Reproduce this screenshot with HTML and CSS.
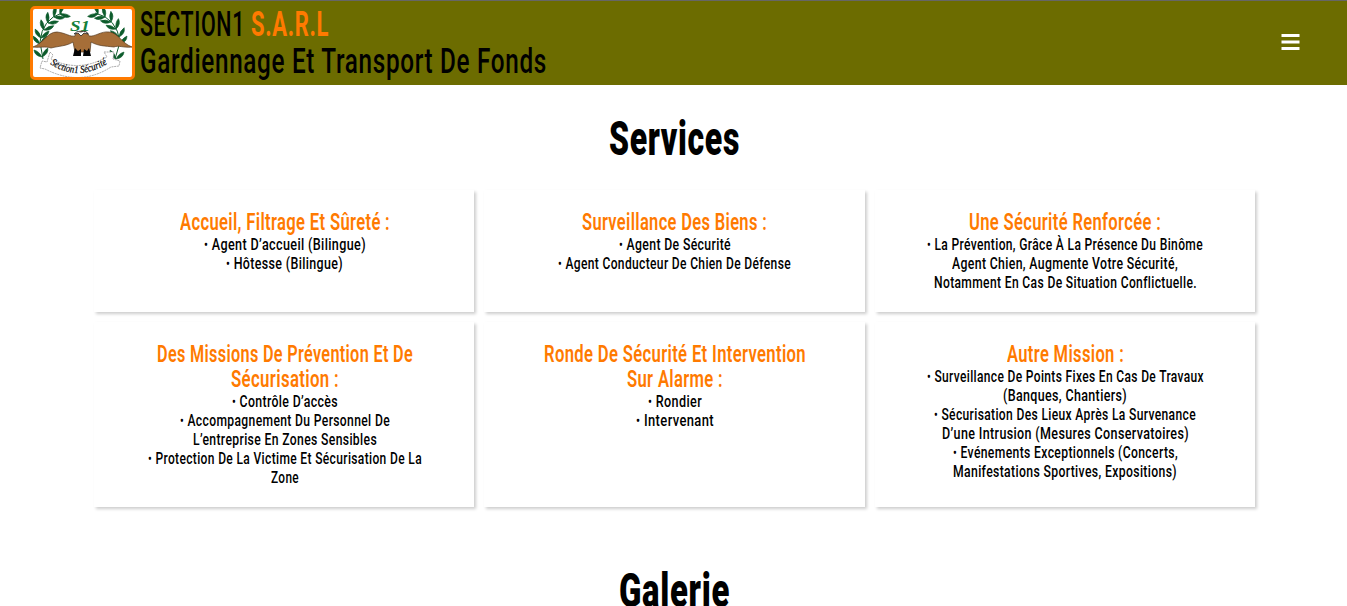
FILE: index.html
```html
<!DOCTYPE html>
<html lang="fr">
<head>
<meta charset="utf-8">
<title>Section1 S.A.R.L</title>
<link rel="stylesheet" href="styles.css">
</head>
<body>
<header class="header">
  <svg class="logo" viewBox="0 0 99 68">
    <defs>
      <path id="ribbon" d="M17 55Q44 73 74 55"/>
      <path id="leaf" d="M0 0Q2-6 7-8Q7-2 0 0ZM0 0Q-2-6-7-8Q-7-2 0 0Z"/>
    </defs>
    <g fill="#0d5c2c" stroke="#0d5c2c" stroke-width=".6">
      <path fill="none" stroke-width="1" d="M29 4Q9 10 7 33L10 50M62 4Q84 9 87 33L82 50"/>
      <use href="#leaf" transform="translate(27 5) rotate(62)"/>
      <use href="#leaf" transform="translate(21 8) rotate(52)"/>
      <use href="#leaf" transform="translate(15 14) rotate(40)"/>
      <use href="#leaf" transform="translate(11 21) rotate(25)"/>
      <use href="#leaf" transform="translate(8 29) rotate(8)"/>
      <use href="#leaf" transform="translate(7 35)"/>
      <use href="#leaf" transform="translate(9 48) rotate(-8)"/>
      <use href="#leaf" transform="translate(65 5) rotate(-62)"/>
      <use href="#leaf" transform="translate(72 8) rotate(-55)"/>
      <use href="#leaf" transform="translate(78 13) rotate(-42)"/>
      <use href="#leaf" transform="translate(83 20) rotate(-28)"/>
      <use href="#leaf" transform="translate(86 28) rotate(-12)"/>
      <use href="#leaf" transform="translate(87 35)"/>
      <use href="#leaf" transform="translate(83 50) rotate(8)"/>
    </g>
    <path d="M17 43L20 46L18 50Q45 64 74 48L71 43L81 43L80 50L87 52L86 57L78 58Q47 78 12 60L7 59L9 52L14 53Z" fill="#fff" stroke="#888" stroke-width=".7" stroke-dasharray="2 .7"/>
    <path d="M0 38C11 34 14 23 24 23C33 24 37 28 42 27Q43 22 49 22Q55 22 56 27C62 28 68 22 76 23C86 24 88 34 99 38C90 39 86 36 81 38C72 37 65 37 58 33L57 43H42L40 33C34 37 26 37 18 39C12 37 8 39 0 38Z" fill="#a66e38" stroke="#54391f" stroke-width=".7"/>
    <path d="M41 25Q44 21 48 23Q53 21 55 25L51 24L48 27L45 24Z" fill="#fff" stroke="#222" stroke-width=".8"/>
    <path d="M40 47L42 39L45 42L48 40V47ZM50 47L51 40L54 42L56 39L58 47Z" fill="#050505"/>
    <text class="logo-mark" x="37" y="22" textLength="20" lengthAdjust="spacingAndGlyphs">S1</text>
    <text class="logo-name"><textPath href="#ribbon" textLength="61" lengthAdjust="spacingAndGlyphs">Section1 Sécurité</textPath></text>
  </svg>
  <div class="brand">
    <div class="brand-row"><span class="fit" data-w="105">SECTION1</span><span class="fit accent" data-w="78">S.A.R.L</span></div>
    <div class="brand-row"><span class="fit" data-w="407">Gardiennage Et Transport De Fonds</span></div>
  </div>
  <svg class="menu" viewBox="0 0 19 17"><path d="M.5 0h18v3H.5zM.5 6.5h18v3H.5zM.5 13h18v3H.5z" fill="#fff"/></svg>
</header>
<main>
  <h1 class="heading"><span class="fit" data-w="131">Services</span></h1>
  <section class="cards">
    <article class="card">
      <h2><span class="fit" data-w="210">Accueil, Filtrage Et Sûreté :</span></h2>
      <p><span class="fit" data-w="162"><i>•</i> Agent D’accueil (Bilingue)</span></p>
      <p><span class="fit" data-w="117"><i>•</i> Hôtesse (Bilingue)</span></p>
    </article>
    <article class="card">
      <h2><span class="fit" data-w="185">Surveillance Des Biens :</span></h2>
      <p><span class="fit" data-w="112"><i>•</i> Agent De Sécurité</span></p>
      <p><span class="fit" data-w="233"><i>•</i> Agent Conducteur De Chien De Défense</span></p>
    </article>
    <article class="card">
      <h2><span class="fit" data-w="192">Une Sécurité Renforcée :</span></h2>
      <p><span class="fit" data-w="276"><i>•</i> La Prévention, Grâce À La Présence Du Binôme</span></p>
      <p><span class="fit" data-w="226">Agent Chien, Augmente Votre Sécurité,</span></p>
      <p><span class="fit" data-w="263">Notamment En Cas De Situation Conflictuelle.</span></p>
    </article>
    <article class="card">
      <h2><span class="fit" data-w="256">Des Missions De Prévention Et De</span></h2>
      <h2><span class="fit" data-w="108">Sécurisation :</span></h2>
      <p><span class="fit" data-w="106"><i>•</i> Contrôle D’accès</span></p>
      <p><span class="fit" data-w="210"><i>•</i> Accompagnement Du Personnel De</span></p>
      <p><span class="fit" data-w="184">L’entreprise En Zones Sensibles</span></p>
      <p><span class="fit" data-w="274"><i>•</i> Protection De La Victime Et Sécurisation De La</span></p>
      <p><span class="fit" data-w="28">Zone</span></p>
    </article>
    <article class="card">
      <h2><span class="fit" data-w="262">Ronde De Sécurité Et Intervention</span></h2>
      <h2><span class="fit" data-w="96">Sur Alarme :</span></h2>
      <p><span class="fit" data-w="54"><i>•</i> Rondier</span></p>
      <p><span class="fit" data-w="78"><i>•</i> Intervenant</span></p>
    </article>
    <article class="card">
      <h2><span class="fit" data-w="117">Autre Mission :</span></h2>
      <p><span class="fit" data-w="277"><i>•</i> Surveillance De Points Fixes En Cas De Travaux</span></p>
      <p><span class="fit" data-w="124">(Banques, Chantiers)</span></p>
      <p><span class="fit" data-w="262"><i>•</i> Sécurisation Des Lieux Après La Survenance</span></p>
      <p><span class="fit" data-w="247">D’une Intrusion (Mesures Conservatoires)</span></p>
      <p><span class="fit" data-w="225"><i>•</i> Evénements Exceptionnels (Concerts,</span></p>
      <p><span class="fit" data-w="224">Manifestations Sportives, Expositions)</span></p>
    </article>
  </section>
  <h1 class="heading gallery"><span class="fit" data-w="111">Galerie</span></h1>
</main>
<script src="fit.js"></script>
</body>
</html>
```
FILE: styles.css
```css
* { box-sizing: border-box; margin: 0; padding: 0; }
body {
  height: 606px;
  overflow: hidden;
  background: #fff;
  color: #000;
  font-family: Roboto, "Liberation Sans", sans-serif;
}
.header {
  display: flex;
  align-items: flex-start;
  height: 85px;
  padding: 5px 47px 0 30px;
  border-top: 1px solid #666;
  background: #6c6c00;
}
.logo {
  width: 105px;
  height: 74px;
  border: 3px solid #ff7a00;
  border-radius: 5px;
  background: #fff;
}
.logo-mark { font: italic bold 15px "Liberation Serif", serif; fill: #14803a; }
.logo-name { font: italic 10.5px "Liberation Serif", serif; fill: #000; stroke: #000; stroke-width: .2px; }
.brand { flex: 1; padding-left: 5px; font-size: 35px; font-weight: 500; letter-spacing: 1px; }
.brand-row { display: flex; gap: 6px; height: 37px; line-height: 38px; }
.accent { color: #ff7a00; font-weight: 700; }
.menu { width: 19px; height: 17px; margin-top: 28px; }
.fit { display: block; flex: none; white-space: nowrap; transform-origin: 0 50%; }
.heading {
  display: flex;
  justify-content: center;
  height: 60px;
  margin-top: 24px;
  padding-left: 2px;
  font-size: 48px;
  font-weight: 900;
  letter-spacing: 1px;
  line-height: 60px;
}
.cards {
  display: grid;
  grid-template-columns: repeat(3, 1fr);
  grid-template-rows: 122px 185px;
  gap: 10px;
  width: 1161px;
  margin: 21px auto 0 94px;
}
.card { padding: 20px 0; box-shadow: 2px 2px 3px rgba(0, 0, 0, .2); background: #fff; }
.card h2, .card p { display: flex; justify-content: center; padding-left: 1px; }
.card h2 { height: 25px; color: #ff7a00; font-size: 24px; font-weight: 600; letter-spacing: .5px; line-height: 25px; }
.card p { height: 19px; font-size: 17px; font-weight: 500; letter-spacing: .5px; line-height: 19px; }
.card i { font-size: 15px; font-style: normal; }
.gallery { margin-top: 54px; }
```
FILE: fit.js
```js
// Condense every line of display text to its data-w width.
document.querySelectorAll('.fit').forEach(function (el) {
  el.style.width = 'max-content';
  var natural = el.getBoundingClientRect().width;
  var target = Number(el.dataset.w);
  el.style.transform = 'scaleX(' + target / natural + ')';
  el.style.width = natural + 'px';
  el.style.marginRight = (target - natural) + 'px';
});
```
